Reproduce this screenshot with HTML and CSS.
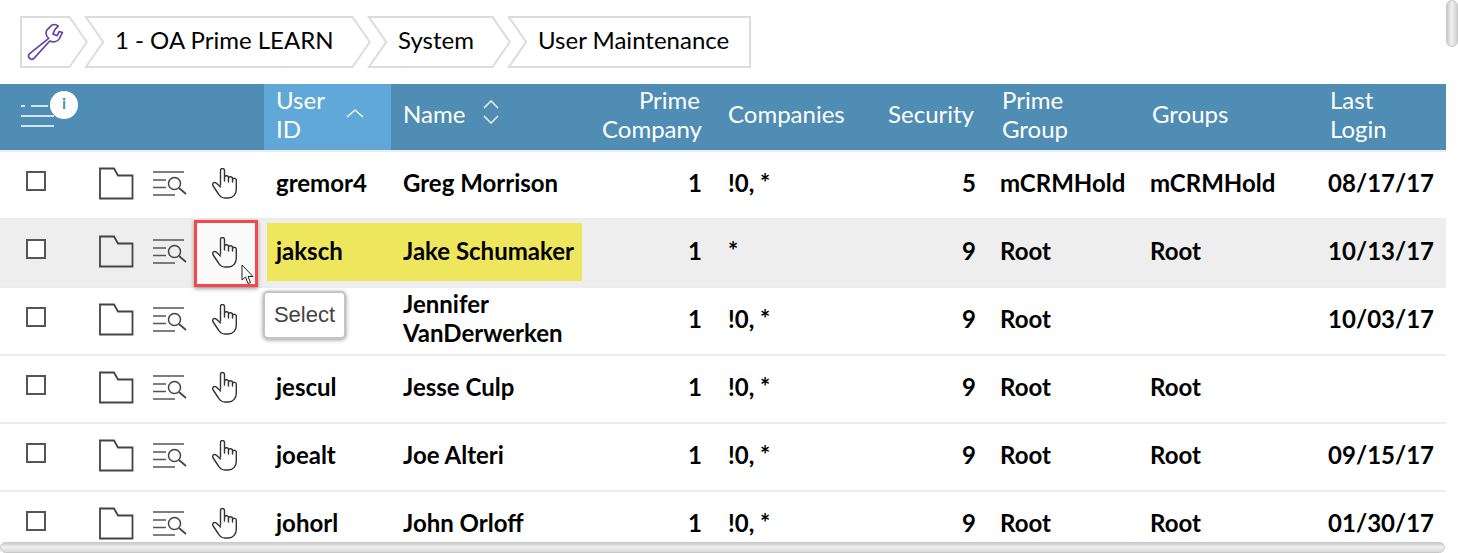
FILE: index.html
```html
<!DOCTYPE html>
<html>
<head>
	<meta charset="utf-8">
	<title>User Maintenance</title>
	<link rel="stylesheet" href="styles.css">
</head>
<body>
	<svg class="sprites" width="0" height="0">
		<symbol id="ico-folder" viewBox="0 0 35 33">
			<path d="M1 1.500H15L19 8.500H33.500V31.500H1Z" fill="none" stroke="#444" stroke-width="1.800"/>
		</symbol>
		<symbol id="ico-list" viewBox="0 0 35 26">
			<path d="M0 1H31M0 9H13M0 16.500H13M0 24H22" fill="none" stroke="#555" stroke-width="1.600"/>
			<circle cx="21.500" cy="12.500" r="6" fill="none" stroke="#444" stroke-width="1.500"/>
			<path d="M26 17L33 23" fill="none" stroke="#444" stroke-width="1.700"/>
		</symbol>
		<symbol id="ico-hand" viewBox="0 0 26 31">
			<path d="M8.500 17V2.500a2 2 0 0 1 4 0V13M12.500 9.500a2 2 0 0 1 4 .5V14M16.500 10.500a2 2 0 0 1 4 .5V14M20.500 12a1.900 1.900 0 0 1 3.800 .5V21c0 5-3 9-8 9H13c-3 0-5-1.500-6.500-4L1.200 18c-1.500-2.500 1-4.500 3-3L8.500 19" fill="none" stroke="#333" stroke-width="1.400" stroke-linecap="round" stroke-linejoin="round"/>
		</symbol>
	</svg>

	<div class="page">
		<nav class="crumbs">
			<a class="crumb crumb-home">
				<svg width="38" height="38" viewBox="3 2 35 36">
					<path d="M27 4L22 9C21 12 22 15 24 16.500L6 31C3 34 7 38 10 35.500L25 19C28 20.500 32 20 34 17L37 11L34 10L32 14L28 12.500L30 8L33 5C31 3 29 3 27 4Z" fill="none" stroke="#5f3da8" stroke-width="1.500" stroke-linejoin="round"/>
				</svg>
			</a>
			<a class="crumb crumb-org">1 - OA Prime LEARN</a>
			<a class="crumb crumb-sys">System</a>
			<a class="crumb crumb-last">User Maintenance</a>
		</nav>

		<table class="grid">
			<colgroup>
				<col class="c-tools">
				<col class="c-id">
				<col class="c-name">
				<col class="c-comp">
				<col class="c-cos">
				<col class="c-sec">
				<col class="c-group">
				<col class="c-groups">
				<col class="c-login">
			</colgroup>
			<thead>
				<tr>
					<th class="head-tools">
						<svg class="head-menu" width="34" height="26" viewBox="0 0 34 26">
							<path d="M0 3H4M10 3H27M0 13H33M0 23H33" fill="none" stroke="#fff" stroke-width="1.300"/>
						</svg>
						<span class="info-badge">i</span>
					</th>
					<th class="sorted">
						<div class="head-sort">User<br>ID
							<svg class="chev-up" width="18" height="10" viewBox="0 0 18 10"><path d="M1 8L9 1L17 8" fill="none" stroke="#fff" stroke-width="1.300"/></svg>
						</div>
					</th>
					<th class="one-line">
						<div class="head-sort">Name
							<svg class="chev-both" width="18" height="26" viewBox="0 0 18 26"><path d="M2 9L9 2L16 9M2 17L9 24L16 17" fill="none" stroke="#fff" stroke-width="1.300"/></svg>
						</div>
					</th>
					<th class="num">Prime<br>Company</th>
					<th class="one-line">Companies</th>
					<th class="num one-line">Security</th>
					<th>Prime<br>Group</th>
					<th class="one-line">Groups</th>
					<th>Last<br>Login</th>
				</tr>
			</thead>
			<tbody>
				<tr>
					<td class="tools"><div class="tool-row"><span class="check"></span><svg class="t-folder"><use href="#ico-folder"/></svg><svg class="t-list"><use href="#ico-list"/></svg><svg class="t-hand"><use href="#ico-hand"/></svg></div></td>
					<td>gremor4</td>
					<td>Greg Morrison</td>
					<td class="num">1</td>
					<td>!0, *</td>
					<td class="num">5</td>
					<td class="pull">mCRMHold</td>
					<td class="pull">mCRMHold</td>
					<td class="num date">08/17/17</td>
				</tr>
				<tr class="hover">
					<td class="tools"><div class="tool-row"><span class="check"></span><svg class="t-folder"><use href="#ico-folder"/></svg><svg class="t-list"><use href="#ico-list"/></svg><svg class="t-hand"><use href="#ico-hand"/></svg></div></td>
					<td class="hl-cell"><div class="hl hl-id">jaksch</div></td>
					<td class="hl-cell"><div class="hl hl-name">Jake Schumaker</div></td>
					<td class="num">1</td>
					<td>*</td>
					<td class="num">9</td>
					<td class="pull">Root</td>
					<td class="pull">Root</td>
					<td class="num date">10/13/17</td>
				</tr>
				<tr>
					<td class="tools"><div class="tool-row"><span class="check"></span><svg class="t-folder"><use href="#ico-folder"/></svg><svg class="t-list"><use href="#ico-list"/></svg><svg class="t-hand"><use href="#ico-hand"/></svg></div></td>
					<td></td>
					<td>Jennifer<br>VanDerwerken</td>
					<td class="num">1</td>
					<td>!0, *</td>
					<td class="num">9</td>
					<td class="pull">Root</td>
					<td class="pull"></td>
					<td class="num date">10/03/17</td>
				</tr>
				<tr>
					<td class="tools"><div class="tool-row"><span class="check"></span><svg class="t-folder"><use href="#ico-folder"/></svg><svg class="t-list"><use href="#ico-list"/></svg><svg class="t-hand"><use href="#ico-hand"/></svg></div></td>
					<td>jescul</td>
					<td>Jesse Culp</td>
					<td class="num">1</td>
					<td>!0, *</td>
					<td class="num">9</td>
					<td class="pull">Root</td>
					<td class="pull">Root</td>
					<td class="num date"></td>
				</tr>
				<tr>
					<td class="tools"><div class="tool-row"><span class="check"></span><svg class="t-folder"><use href="#ico-folder"/></svg><svg class="t-list"><use href="#ico-list"/></svg><svg class="t-hand"><use href="#ico-hand"/></svg></div></td>
					<td>joealt</td>
					<td>Joe Alteri</td>
					<td class="num">1</td>
					<td>!0, *</td>
					<td class="num">9</td>
					<td class="pull">Root</td>
					<td class="pull">Root</td>
					<td class="num date">09/15/17</td>
				</tr>
				<tr>
					<td class="tools"><div class="tool-row"><span class="check"></span><svg class="t-folder"><use href="#ico-folder"/></svg><svg class="t-list"><use href="#ico-list"/></svg><svg class="t-hand"><use href="#ico-hand"/></svg></div></td>
					<td>johorl</td>
					<td>John Orloff</td>
					<td class="num">1</td>
					<td>!0, *</td>
					<td class="num">9</td>
					<td class="pull">Root</td>
					<td class="pull">Root</td>
					<td class="num date">01/30/17</td>
				</tr>
			</tbody>
		</table>

		<!-- hover state on row 2 -->
		<div class="hover-box"><svg class="t-hand"><use href="#ico-hand"/></svg></div>
		<svg class="cursor" width="14" height="21" viewBox="0 0 14 21">
			<path d="M1 1V16L4.500 13L7 19.500L9.500 18.500L7 12.500H12Z" fill="#fff" stroke="#222" stroke-width="1"/>
		</svg>
		<div class="tooltip">Select</div>

		<div class="scroll-v"></div>
		<div class="scroll-h"></div>
	</div>
</body>
</html>
```
FILE: styles.css
```css
* {
	box-sizing: border-box;
}

html, body {
	margin: 0;
	padding: 0;
	background: #fff;
}

.sprites {
	position: absolute;
}

.page {
	position: relative;
	width: 1458px;
	height: 553px;
	overflow: hidden;
	font-family: "Lato", "Liberation Sans", sans-serif;
	color: #000;
}

/* breadcrumbs */
.crumbs {
	display: flex;
	padding: 16px 0 0 20px;
	height: 84px;
}

.crumb {
	position: relative;
	isolation: isolate;
	display: flex;
	align-items: center;
	height: 52px;
	margin-left: -4px;
	padding: 0 0 6px 31px;
	font-size: 24px;
	background: #dcdcdc;
	clip-path: polygon(0 0, calc(100% - 18px) 0, 100% 50%, calc(100% - 18px) 100%, 0 100%, 18px 50%);
}

/* white fill, the grey shows as the outline */
.crumb::before {
	content: "";
	position: absolute;
	z-index: -1;
	inset: 0;
	background: #fff;
	clip-path: polygon(3.800px 2px, calc(100% - 19px) 2px, calc(100% - 2.400px) 50%, calc(100% - 19px) calc(100% - 2px), 3.800px calc(100% - 2px), 20.400px 50%);
}

.crumb-home {
	width: 68px;
	margin-left: 0;
	padding: 0 0 0 6px;
	clip-path: polygon(0 0, calc(100% - 18px) 0, 100% 50%, calc(100% - 18px) 100%, 0 100%);
}

.crumb-home::before {
	clip-path: polygon(2px 2px, calc(100% - 19px) 2px, calc(100% - 2.400px) 50%, calc(100% - 19px) calc(100% - 2px), 2px calc(100% - 2px));
}

.crumb-org {
	width: 287px;
}

.crumb-sys {
	width: 144px;
}

.crumb-last {
	width: 244px;
	clip-path: polygon(0 0, 100% 0, 100% 100%, 0 100%, 18px 50%);
}

.crumb-last::before {
	clip-path: polygon(3.800px 2px, calc(100% - 2px) 2px, calc(100% - 2px) calc(100% - 2px), 3.800px calc(100% - 2px), 20.400px 50%);
}

/* table */
.grid {
	width: 1446px;
	table-layout: fixed;
	border-collapse: separate;
	border-spacing: 0;
	font-size: 24px;
	line-height: 29px;
}

.c-tools { width: 264px; }
.c-id { width: 127px; }
.c-name { width: 199px; }
.c-comp { width: 126px; }
.c-cos { width: 160px; }
.c-sec { width: 114px; }
.c-group { width: 150px; }
.c-groups { width: 178px; }
.c-login { width: 128px; }

.grid th {
	height: 66px;
	padding: 0 12px 6px;
	background: #4f8db4;
	color: #fff;
	font-weight: 400;
	text-align: left;
}

.grid th.one-line {
	padding-bottom: 8px;
}

.grid th.num {
	text-align: right;
	padding-right: 16px;
}

.grid th.sorted {
	background: #5fa8d7;
}

.head-tools {
	position: relative;
}

.head-menu {
	display: block;
	margin: 3px 0 0 9px;
}

.info-badge {
	position: absolute;
	left: 50px;
	top: 7px;
	width: 28px;
	height: 28px;
	border-radius: 50%;
	background: #fff;
	color: #4f8db4;
	font-size: 16px;
	font-weight: 700;
	line-height: 24px;
	text-align: center;
}

.head-sort {
	position: relative;
}

.chev-up {
	position: absolute;
	right: 15px;
	top: 24px;
}

.chev-both {
	position: absolute;
	left: 79px;
	top: 0;
}

.grid td {
	height: 68px;
	padding: 0 12px 6px;
	border-top: 2px solid #ececec;
	font-weight: 700;
	white-space: nowrap;
}

.grid td.num {
	text-align: right;
	padding-right: 14px;
}

.grid td.date {
	padding-left: 0;
	padding-right: 12px;
}

.grid td.pull {
	padding-left: 10px;
}

.grid tr.hover td {
	background: #eeeeee;
}

.grid td.hl-cell {
	padding: 0;
}

.hl {
	height: 58px;
	margin-bottom: 3px;
	line-height: 56px;
	background: #eee65c;
}

.hl-id {
	margin-left: 3px;
	padding-left: 9px;
}

.hl-name {
	width: 191px;
	padding-left: 12px;
}

.grid td.tools {
	padding-bottom: 4px;
}

.tool-row {
	display: flex;
	align-items: center;
	margin-left: 14px;
}

.check {
	width: 20px;
	height: 20px;
	margin-bottom: 5px;
	border: 2px solid #555;
	background: #fff;
}

.t-folder {
	width: 35px;
	height: 33px;
	margin-left: 53px;
}

.t-list {
	width: 35px;
	height: 26px;
	margin-left: 19px;
	margin-top: 1px;
}

.t-hand {
	width: 26px;
	height: 31px;
	margin-left: 24px;
	margin-top: 1px;
}

/* things lying over the table */
.hover-box {
	position: absolute;
	left: 194px;
	top: 220px;
	width: 64px;
	height: 67px;
	padding: 13.500px 0 0 14.500px;
	border: 3px solid #f5474c;
	background: #fafafa;
	box-shadow: 0 2px 4px rgba(0, 0, 0, 0.35);
}

.hover-box .t-hand {
	margin: 0;
}

.cursor {
	position: absolute;
	left: 241px;
	top: 264px;
}

.tooltip {
	position: absolute;
	left: 263px;
	top: 291px;
	width: 83px;
	height: 48px;
	border: 2px solid #c4c4c4;
	border-radius: 5px;
	background: #fff;
	box-shadow: 0 1px 4px rgba(0, 0, 0, 0.4);
	font-family: "Liberation Sans", sans-serif;
	font-size: 22px;
	line-height: 43px;
	text-align: center;
	color: #444;
}

.scroll-v, .scroll-h {
	position: absolute;
	border: 1px solid #c8c8c8;
}

.scroll-v {
	left: 1446px;
	top: 0;
	width: 12px;
	height: 47px;
	border-radius: 6px;
	background: linear-gradient(to right, #c9c9c9, #f0f0f0 45%, #d2d2d2);
}

.scroll-h {
	left: 0;
	top: 542px;
	width: 1445px;
	height: 11px;
	border-radius: 6px;
	background: linear-gradient(to bottom, #cdcdcd, #f0f0f0 45%, #dadada);
}
```
